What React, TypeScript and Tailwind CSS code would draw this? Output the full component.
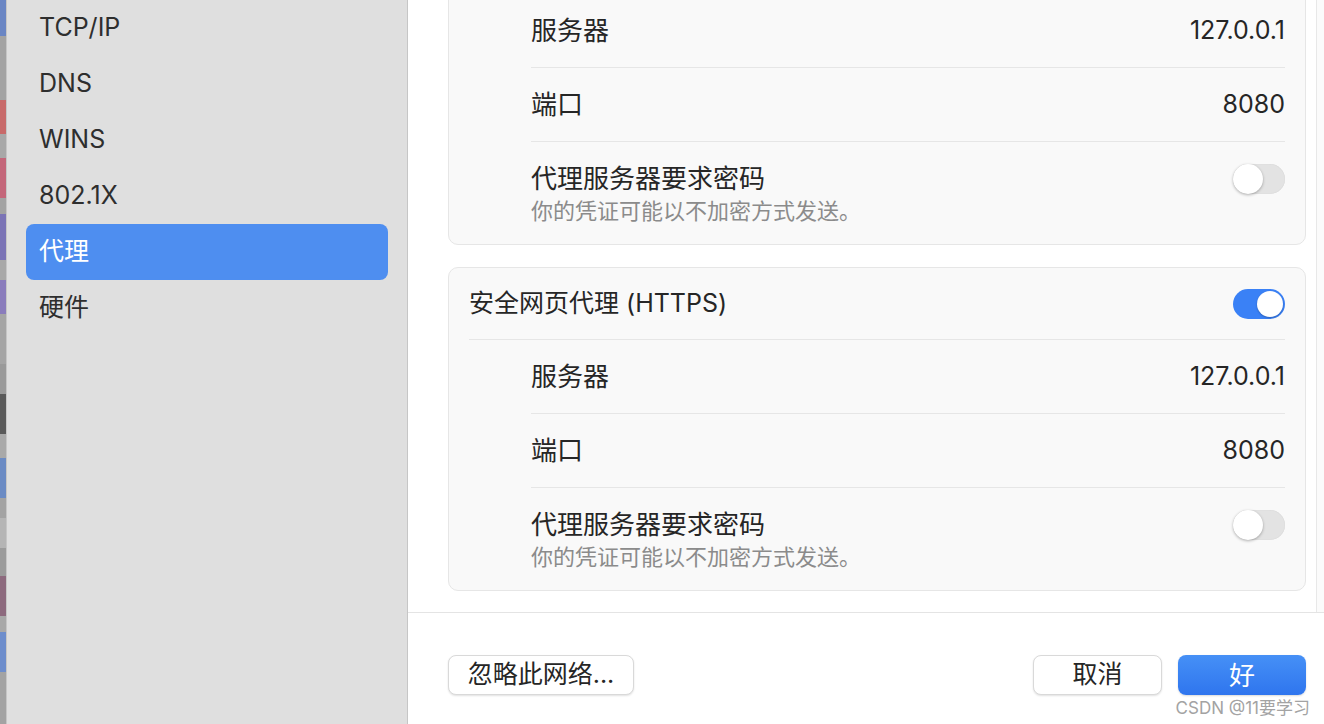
import React from "react";

const FONT = "font-['Inter','Noto_Sans_CJK_SC',sans-serif]";

function Toggle({ on }: { on: boolean }) {
  return on ? (
    <div className="relative h-[30px] w-[52px] rounded-full bg-[#3a81f6]">
      <div className="absolute right-[2px] top-[2px] h-[26px] w-[26px] rounded-full bg-white shadow-[0_1px_2px_rgba(0,0,0,0.25)]" />
    </div>
  ) : (
    <div className="relative h-[30px] w-[52px] rounded-full bg-[#e3e3e3] shadow-[inset_0_0_1px_rgba(0,0,0,0.15)]">
      <div className="absolute left-0 top-0 h-[30px] w-[30px] rounded-full bg-white shadow-[0_1px_3px_rgba(0,0,0,0.3)]" />
    </div>
  );
}

function ProxyCard({ title, on, className = "" }: { title: string; on: boolean; className?: string }) {
  return (
    <div className={`rounded-[10px] border border-[#e6e6e6] bg-[#f9f9f9] ${className}`}>
      <div className="flex h-[71px] items-center justify-between px-5">
        <span className="text-[25px] text-[#262626]">{title}</span>
        <Toggle on={on} />
      </div>
      <div className="mx-5 border-t border-[#e6e6e6]" />
      <div className="ml-[82px] mr-5">
        <div className="flex h-[74px] items-center justify-between border-b border-[#e6e6e6]">
          <span className="text-[26px] text-[#262626]">服务器</span>
          <span className="text-[25px] text-[#262626]">127.0.0.1</span>
        </div>
        <div className="flex h-[74px] items-center justify-between border-b border-[#e6e6e6]">
          <span className="text-[26px] text-[#262626]">端口</span>
          <span className="text-[25px] text-[#262626]">8080</span>
        </div>
        <div className="pb-[18px] pt-5">
          <div className="flex h-[34px] items-center justify-between">
            <span className="text-[26px] leading-[34px] text-[#262626]">代理服务器要求密码</span>
            <Toggle on={false} />
          </div>
          <div className="text-[22px] leading-[30px] text-[#8b8b8b]">你的凭证可能以不加密方式发送。</div>
        </div>
      </div>
    </div>
  );
}

const stripColors = [
  "h-[36px] bg-[#6a86c4]",
  "h-[64px] bg-[#a3a3a3]",
  "h-[34px] bg-[#c86a6a]",
  "h-[24px] bg-[#a8a8a8]",
  "h-[40px] bg-[#c4677a]",
  "h-[16px] bg-[#a3a3a3]",
  "h-[46px] bg-[#7b74b6]",
  "h-[20px] bg-[#a8a8a8]",
  "h-[34px] bg-[#8a7cbc]",
  "h-[50px] bg-[#a5a5a5]",
  "h-[30px] bg-[#9a9a9a]",
  "h-[40px] bg-[#5a5a5a]",
  "h-[24px] bg-[#a9a9a9]",
  "h-[40px] bg-[#6b8bc4]",
  "h-[20px] bg-[#a3a3a3]",
  "h-[30px] bg-[#b5b5b5]",
  "h-[28px] bg-[#9b9b9b]",
  "h-[40px] bg-[#8d6a7e]",
  "h-[16px] bg-[#a8a8a8]",
  "h-[40px] bg-[#6d8dcc]",
  "h-[76px] bg-[#a3a3a3]",
];

export default function App() {
  const items = ["TCP/IP", "DNS", "WINS", "802.1X", "代理", "硬件"];
  return (
    <div className={`relative flex h-[724px] w-[1324px] overflow-hidden bg-white ${FONT}`}>
      {/* desktop strip */}
      <div className="flex w-[6px] shrink-0 flex-col">
        {stripColors.map((c, i) => (
          <div key={i} className={`w-full shrink-0 ${c}`} />
        ))}
      </div>
      {/* sidebar */}
      <div className="flex w-[402px] shrink-0 flex-col border-l border-r border-[#c6c6c6] bg-[#dfdfdf]">
        <div className="flex flex-col">
          {items.map((t) => {
            const sel = t === "代理";
            return (
              <div
                key={t}
                className={`mx-[19px] flex h-[56px] items-center rounded-[8px] px-[13px] text-[25px] ${
                  sel ? "bg-[#4e8ef0] text-white" : "text-[#2e2e2e]"
                }`}
              >
                {t}
              </div>
            );
          })}
        </div>
      </div>
      {/* main */}
      <div className="flex min-w-0 flex-1 flex-col">
        <div className="flex h-[613px] shrink-0 overflow-hidden border-b border-[#e4e4e4]">
          <div className="flex min-w-0 flex-1 flex-col gap-[22px] pl-10 pr-[10px]">
            <ProxyCard title="网页代理 (HTTP)" on className="-mt-[79px]" />
            <ProxyCard title="安全网页代理 (HTTPS)" on />
            <ProxyCard title="SOCKS代理" on={false} />
          </div>
          <div className="w-[8px] shrink-0 border-l border-[#e8e8e8] bg-[#fbfbfb]" />
        </div>
        <div className="flex flex-1 items-start justify-between pl-10 pr-[18px] pt-[42px]">
          <button className="flex h-[40px] w-[186px] items-center justify-center rounded-[8px] border border-[#d9d9d9] bg-white text-[25px] text-[#262626] shadow-[0_1px_2px_rgba(0,0,0,0.12)]">
            忽略此网络...
          </button>
          <div className="flex gap-4">
            <button className="flex h-[40px] w-[129px] items-center justify-center rounded-[8px] border border-[#d9d9d9] bg-white text-[25px] text-[#262626] shadow-[0_1px_2px_rgba(0,0,0,0.12)]">
              取消
            </button>
            <button className="flex h-[40px] w-[128px] items-center justify-center rounded-[8px] bg-gradient-to-b from-[#4690f6] to-[#2f75ee] text-[26px] text-white shadow-[0_1px_2px_rgba(0,0,0,0.15)]">
              好
            </button>
          </div>
        </div>
      </div>
      <div className="absolute bottom-[6px] right-[14px] text-[17px] leading-[20px] text-[#a3a3a3]">CSDN @11要学习</div>
    </div>
  );
}
